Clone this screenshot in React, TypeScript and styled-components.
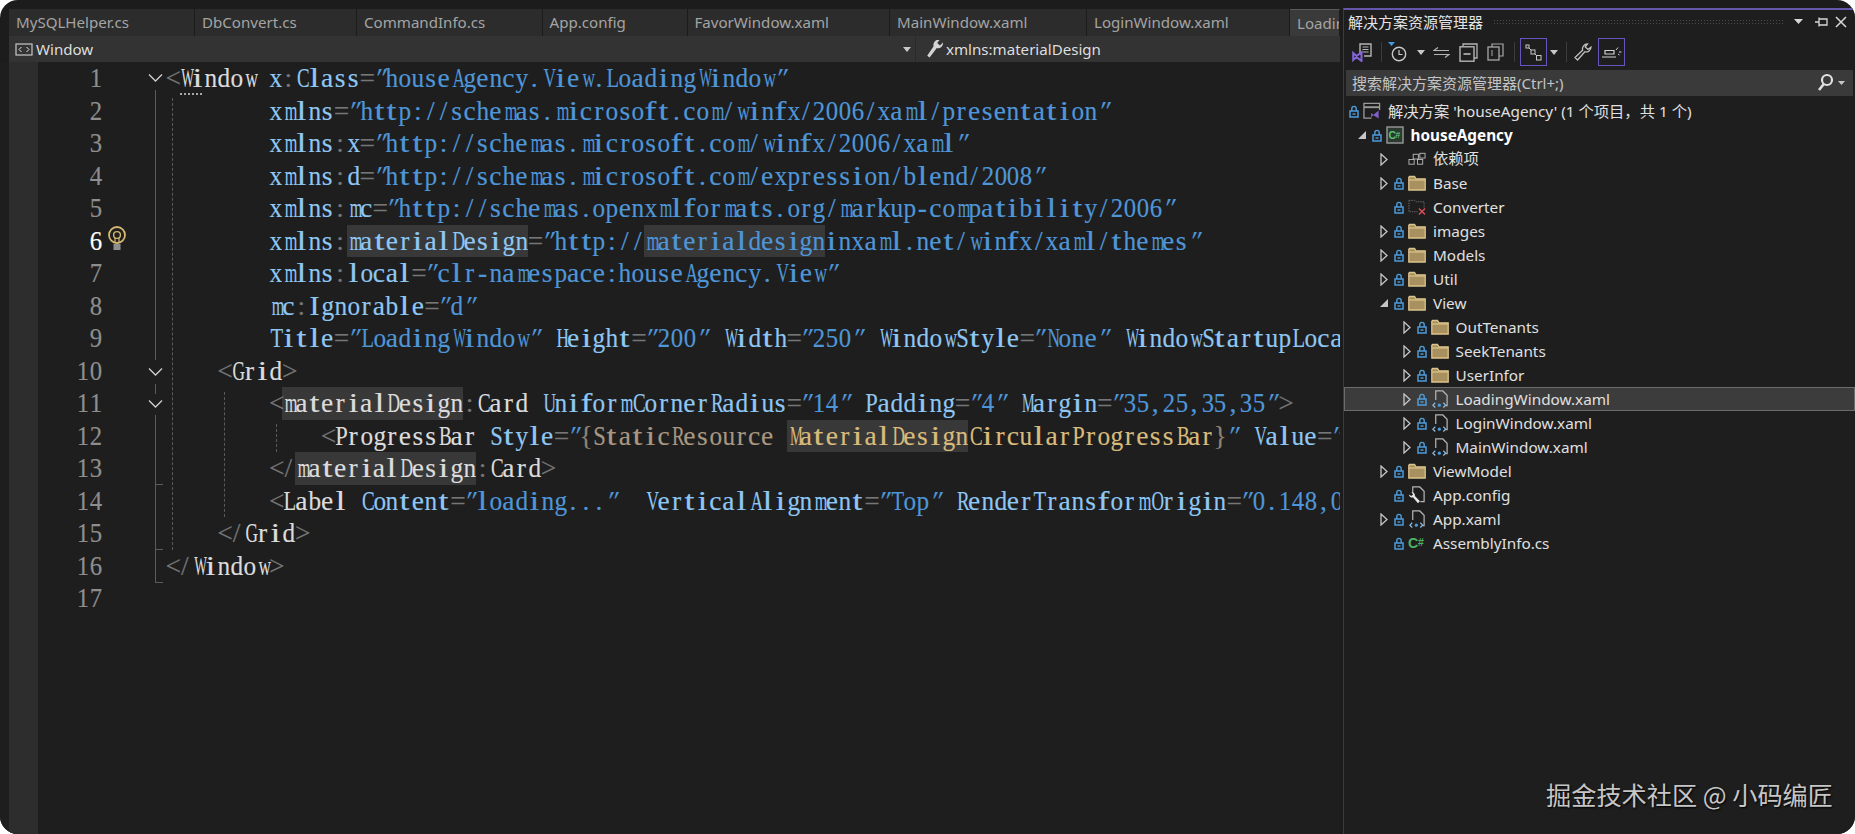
import React from 'react'
import styled, { createGlobalStyle } from 'styled-components'

const UI_FONT = '"Noto Sans", "Noto Sans CJK SC", sans-serif'
const CELL = 12.95
const ROW = 32.5
const CODE_SIZE = 27.5

const GlobalStyle = createGlobalStyle`
  html, body {
    margin: 0;
    padding: 0;
    background: #ffffff;
  }
`

type Kind = 'punct' | 'tag' | 'attr' | 'value' | 'static' | 'resource' | 'brace'
type Token = { kind: Kind; text: string; mark?: boolean }

const tk = (kind: Kind, text: string, mark?: boolean): Token => ({ kind, text, mark })
const p = (text: string) => tk('punct', text)
const sp = (n = 1) => tk('attr', ' '.repeat(n))
const attr = (name: string, value: string): Token[] => [
  tk('attr', name),
  p('='),
  tk('value', `"${value}"`),
]
const nsAttr = (ns: string, name: string, value: string): Token[] => [
  tk('attr', ns),
  p(':'),
  ...attr(name, value),
]

const CODE: Token[][] = [
  [p('<'), tk('tag', 'Window'), sp(), ...nsAttr('x', 'Class', 'houseAgency.View.LoadingWindow')],
  [sp(8), ...attr('xmlns', 'http://schemas.microsoft.com/winfx/2006/xaml/presentation')],
  [sp(8), ...nsAttr('xmlns', 'x', 'http://schemas.microsoft.com/winfx/2006/xaml')],
  [sp(8), ...nsAttr('xmlns', 'd', 'http://schemas.microsoft.com/expression/blend/2008')],
  [sp(8), ...nsAttr('xmlns', 'mc', 'http://schemas.openxmlformats.org/markup-compatibility/2006')],
  [
    sp(8),
    tk('attr', 'xmlns'),
    p(':'),
    tk('attr', 'materialDesign', true),
    p('='),
    tk('value', '"http://'),
    tk('value', 'materialdesign', true),
    tk('value', 'inxaml.net/winfx/xaml/themes"'),
  ],
  [sp(8), ...nsAttr('xmlns', 'local', 'clr-namespace:houseAgency.View')],
  [sp(8), ...nsAttr('mc', 'Ignorable', 'd')],
  [
    sp(8),
    ...attr('Title', 'LoadingWindow'),
    sp(),
    ...attr('Height', '200'),
    sp(),
    ...attr('Width', '250'),
    sp(),
    ...attr('WindowStyle', 'None'),
    sp(),
    ...attr('WindowStartupLocation', 'CenterScreen'),
  ],
  [sp(4), p('<'), tk('tag', 'Grid'), p('>')],
  [
    sp(8),
    p('<'),
    tk('tag', 'materialDesign', true),
    p(':'),
    tk('tag', 'Card'),
    sp(),
    ...attr('UniformCornerRadius', '14'),
    sp(),
    ...attr('Padding', '4'),
    sp(),
    ...attr('Margin', '35,25,35,35'),
    p('>'),
  ],
  [
    sp(12),
    p('<'),
    tk('tag', 'ProgressBar'),
    sp(),
    tk('attr', 'Style'),
    p('='),
    tk('value', '"'),
    tk('brace', '{'),
    tk('static', 'StaticResource '),
    tk('resource', 'MaterialDesign', true),
    tk('resource', 'CircularProgressBar'),
    tk('brace', '}'),
    tk('value', '"'),
    sp(),
    ...attr('Value', '0'),
  ],
  [sp(8), p('</'), tk('tag', 'materialDesign', true), p(':'), tk('tag', 'Card'), p('>')],
  [
    sp(8),
    p('<'),
    tk('tag', 'Label'),
    sp(),
    ...attr('Content', 'loading...'),
    sp(2),
    ...attr('VerticalAlignment', 'Top'),
    sp(),
    ...attr('RenderTransformOrigin', '0.148,0.5'),
  ],
  [sp(4), p('</'), tk('tag', 'Grid'), p('>')],
  [p('</'), tk('tag', 'Window'), p('>')],
  [],
]

const TABS = [
  { name: 'MySQLHelper.cs', width: 186 },
  { name: 'DbConvert.cs', width: 162 },
  { name: 'CommandInfo.cs', width: 185.5 },
  { name: 'App.config', width: 145 },
  { name: 'FavorWindow.xaml', width: 202.5 },
  { name: 'MainWindow.xaml', width: 197 },
  { name: 'LoginWindow.xaml', width: 203 },
  { name: 'LoadingWindow.xaml', width: 50, active: true },
]

type IconKind = 'folder' | 'missing' | 'xaml' | 'config' | 'cs' | 'deps' | 'solution' | 'project'
type TreeItem = {
  label: string
  depth: number
  icon: IconKind
  arrow?: 'closed' | 'open'
  noLock?: boolean
  bold?: boolean
  selected?: boolean
}

const TREE: TreeItem[] = [
  { label: "解决方案 'houseAgency' (1 个项目，共 1 个)", depth: 0, icon: 'solution' },
  { label: 'houseAgency', depth: 1, icon: 'project', arrow: 'open', bold: true },
  { label: '依赖项', depth: 2, icon: 'deps', arrow: 'closed', noLock: true },
  { label: 'Base', depth: 2, icon: 'folder', arrow: 'closed' },
  { label: 'Converter', depth: 2, icon: 'missing' },
  { label: 'images', depth: 2, icon: 'folder', arrow: 'closed' },
  { label: 'Models', depth: 2, icon: 'folder', arrow: 'closed' },
  { label: 'Util', depth: 2, icon: 'folder', arrow: 'closed' },
  { label: 'View', depth: 2, icon: 'folder', arrow: 'open' },
  { label: 'OutTenants', depth: 3, icon: 'folder', arrow: 'closed' },
  { label: 'SeekTenants', depth: 3, icon: 'folder', arrow: 'closed' },
  { label: 'UserInfor', depth: 3, icon: 'folder', arrow: 'closed' },
  { label: 'LoadingWindow.xaml', depth: 3, icon: 'xaml', arrow: 'closed', selected: true },
  { label: 'LoginWindow.xaml', depth: 3, icon: 'xaml', arrow: 'closed' },
  { label: 'MainWindow.xaml', depth: 3, icon: 'xaml', arrow: 'closed' },
  { label: 'ViewModel', depth: 2, icon: 'folder', arrow: 'closed' },
  { label: 'App.config', depth: 2, icon: 'config' },
  { label: 'App.xaml', depth: 2, icon: 'xaml', arrow: 'closed' },
  { label: 'AssemblyInfo.cs', depth: 2, icon: 'cs' },
]

// Times metrics, used to squeeze the glyphs into a fixed width grid like SimSun
const WIDE: Record<string, number> = {
  W: 0.944, M: 0.889, m: 0.778, w: 0.722, H: 0.722, A: 0.722, D: 0.722, U: 0.722, G: 0.722,
  V: 0.722, N: 0.722, O: 0.722, C: 0.667, R: 0.667, B: 0.667, T: 0.611, L: 0.611, P: 0.556,
  S: 0.556, I: 0.4,
  n: 0.5, h: 0.5, u: 0.5, d: 0.5, b: 0.5, p: 0.5, g: 0.5, o: 0.5, x: 0.5, y: 0.5, v: 0.5,
}
const glyphScale = (ch: string) => {
  if (ch === 'i' || ch === 'l' || ch === 'f' || ch === 't' || ch === 'j') return 1.3
  const w = WIDE[ch]
  if (w) return Math.round((12.6 / (w * CODE_SIZE)) * 100) / 100
  return /[0-9]/.test(ch) ? 0.9 : 1
}

const KIND_COLOR: Record<Kind, string> = {
  punct: '#767676',
  tag: '#dcdcdc',
  attr: '#8fc7f3',
  value: '#4f96d8',
  static: '#a89782',
  resource: '#d9bb7c',
  brace: '#8f8272',
}

const Shell = styled.div`
  position: relative;
  width: 1855px;
  height: 834px;
  display: grid;
  grid-template-columns: 1343px 512px;
  border-radius: 18px;
  overflow: hidden;
  background: #1c1c1c;
`

const EditorPane = styled.div`
  position: relative;
  display: flex;
  flex-direction: column;
  padding: 9px 3px 0 9px;
  overflow: hidden;
`

const TabStrip = styled.div`
  display: flex;
  height: 27px;
  flex: none;
  overflow: hidden;
`

const Tab = styled.div<{ $width: number; $active?: boolean }>`
  flex: none;
  box-sizing: border-box;
  width: ${(props) => props.$width}px;
  padding-left: 7px;
  border-right: 1px solid #1c1c1c;
  background: ${(props) => (props.$active ? '#3a3a3a' : '#2c2c2c')};
  border-top: ${(props) => (props.$active ? '1px solid #5a5a5a' : 'none')};
  color: #a4a4a4;
  font: 15.1px/27px ${UI_FONT};
  white-space: nowrap;
  overflow: hidden;
`

const NavBar = styled.div`
  position: relative;
  flex: none;
  height: 26px;
  background: #333333;
  color: #dedede;
  font: 15.1px/26px ${UI_FONT};
`

const NavLeft = styled.div`
  position: absolute;
  left: 6px;
  top: 0;
  display: flex;
  align-items: center;
  gap: 3px;
  height: 26px;
`

const NavRight = styled.div`
  position: absolute;
  left: 906px;
  top: 0;
  display: flex;
  align-items: center;
  gap: 2px;
  height: 26px;
  padding-left: 10px;
  border-left: 1px solid #2a2a2a;
`

const NavCaret = styled.div`
  position: absolute;
  left: 894px;
  top: 11px;
  width: 0;
  height: 0;
  border: 4px solid transparent;
  border-top: 5px solid #c8c8c8;
  border-bottom: 0;
`

const CodeArea = styled.div`
  position: relative;
  flex: 1;
  margin-left: -9px;
  background: #1e1e1e;
  overflow: hidden;
`

const MarginBand = styled.div`
  position: absolute;
  left: 9px;
  top: 0;
  bottom: 0;
  width: 29px;
  background: #2d2d2d;
`

const Rule = styled.div<{ $x: number; $top: number; $bottom: number; $dashed?: boolean }>`
  position: absolute;
  left: ${(props) => props.$x}px;
  top: ${(props) => props.$top - 62}px;
  height: ${(props) => props.$bottom - props.$top}px;
  border-left: 1px ${(props) => (props.$dashed ? 'dashed #5a5a5a' : 'solid #5c5c5c')};
`

const Tick = styled.div<{ $y: number }>`
  position: absolute;
  left: 155px;
  top: ${(props) => props.$y - 62}px;
  width: 8px;
  border-top: 1px solid #5c5c5c;
`

const Chevron = styled.svg<{ $y: number }>`
  position: absolute;
  left: 148px;
  top: ${(props) => props.$y - 62 - 5}px;
`

const Dots = styled.div`
  position: absolute;
  left: 180px;
  top: 31px;
  width: 22px;
  border-top: 2px dotted #a8a8a8;
`

const Bulb = styled.svg`
  position: absolute;
  left: 107px;
  top: 164px;
`

const CodeRow = styled.div`
  position: relative;
  display: grid;
  grid-template-columns: 102px 63.5px 1fr;
  height: ${ROW}px;
  line-height: ${ROW}px;
  font-family: "Liberation Serif", "Noto Sans CJK SC", serif;
  font-size: ${CODE_SIZE}px;
  -webkit-text-stroke: 0.15px currentColor;
  white-space: pre;
`

const LineNo = styled.div<{ $current?: boolean }>`
  text-align: right;
  color: ${(props) => (props.$current ? '#ffffff' : '#8e8e8e')};
`

const CodeText = styled.div`
  grid-column: 3;
`

const Span = styled.span<{ $kind: Kind; $mark?: boolean }>`
  display: inline-block;
  height: ${ROW}px;
  color: ${(props) => KIND_COLOR[props.$kind]};
  background: ${(props) => (props.$mark ? '#383838' : 'transparent')};
`

const Ch = styled.span<{ $scale: number; $slant?: boolean }>`
  display: inline-block;
  width: ${CELL}px;
  text-align: center;
  transform: scaleX(${(props) => props.$scale}) ${(props) => (props.$slant ? 'skewX(-22deg)' : '')};
`

const Explorer = styled.div`
  position: relative;
  border-left: 1px solid #3b3b3b;
  border-top: 2px solid #6657ab;
  margin-top: 8px;
  background: #1e1e1e;
  color: #e0e0e0;
  font-family: ${UI_FONT};
`

const TitleBar = styled.div`
  position: relative;
  height: 28px;
  padding-left: 4px;
  font-size: 15px;
  line-height: 24px;
  color: #e4e4e4;
`

const Grip = styled.div`
  position: absolute;
  left: 149px;
  top: 9px;
  width: 292px;
  height: 6px;
  background-image: radial-gradient(#4a4a4a 0.7px, transparent 0.8px);
  background-size: 3px 3px;
`

const TitleButtons = styled.svg`
  position: absolute;
  left: 448px;
  top: 4px;
`

const ToolStrip = styled.div`
  display: flex;
  align-items: center;
  height: 28px;
`

const Tool = styled.div<{ $w: number; $toggled?: boolean }>`
  flex: none;
  box-sizing: border-box;
  display: flex;
  align-items: center;
  justify-content: center;
  width: ${(props) => props.$w}px;
  height: 28px;
  border: ${(props) => (props.$toggled ? '1px solid #6657c0' : 'none')};
`

const ToolSep = styled.div<{ $left: number; $right: number }>`
  flex: none;
  width: 1px;
  height: 20px;
  margin: 0 ${(props) => props.$right}px 0 ${(props) => props.$left}px;
  background: #3c3c3c;
`

const Caret = styled.div`
  width: 0;
  height: 0;
  border: 4px solid transparent;
  border-top: 5px solid #c8c8c8;
  border-bottom: 0;
`

const SearchBox = styled.div`
  position: relative;
  box-sizing: border-box;
  height: 26px;
  margin: 4px 2px 0 2px;
  padding-left: 6px;
  background: #3a3a3a;
  color: #c4c4c4;
  font-size: 15px;
  line-height: 26px;
`

const SearchIcon = styled.svg`
  position: absolute;
  right: 6px;
  top: 3px;
`

const Tree = styled.div`
  margin-top: 3px;
`

const TreeRow = styled.div<{ $selected?: boolean }>`
  box-sizing: border-box;
  display: flex;
  align-items: center;
  height: 24px;
  background: ${(props) => (props.$selected ? '#3c3c3c' : 'transparent')};
  box-shadow: ${(props) => (props.$selected ? 'inset 0 0 0 1px #6c6c6c' : 'none')};
`

const ArrowSlot = styled.div<{ $depth: number }>`
  flex: none;
  display: flex;
  align-items: center;
  justify-content: center;
  width: 18px;
  margin-left: ${(props) => props.$depth * 22.5 - 14}px;
`

const LockSlot = styled.div`
  flex: none;
  display: flex;
  justify-content: center;
  width: 12px;
  margin-right: 3px;
`

const IconSlot = styled.div`
  flex: none;
  display: flex;
  align-items: center;
  justify-content: center;
  width: 18px;
  height: 20px;
  margin-right: 7px;
`

const Label = styled.div<{ $bold?: boolean; $nudge?: boolean }>`
  position: relative;
  top: ${(props) => (props.$nudge ? '-1px' : '0')};
  color: ${(props) => (props.$bold ? '#ffffff' : '#e0e0e0')};
  font-size: 15.3px;
  line-height: 24px;
  font-weight: ${(props) => (props.$bold ? 700 : 400)};
  white-space: pre;
`

const Watermark = styled.div`
  position: absolute;
  left: 1546px;
  top: 777px;
  color: #c6c6c6;
  font: 25.2px/34px "Noto Sans CJK SC", "Noto Sans", sans-serif;
  text-shadow: 1px 1px 2px #000000;
  white-space: pre;
`

function Glyphs({ text }: { text: string }) {
  return (
    <>
      {[...text].map((ch, i) => (
        <Ch key={i} $scale={glyphScale(ch)} $slant={ch === '"'}>
          {ch}
        </Ch>
      ))}
    </>
  )
}

function FoldChevron({ y }: { y: number }) {
  return (
    <Chevron $y={y} width="15" height="10" viewBox="0 0 15 10">
      <path d="M1 1.5 L7.5 8 L14 1.5" fill="none" stroke="#d0d0d0" strokeWidth="1.3" />
    </Chevron>
  )
}

function LockIcon() {
  return (
    <svg width="10" height="13" viewBox="0 0 10 13">
      <path d="M2.8 6V3.6a2.2 2.2 0 0 1 4.4 0V6" fill="none" stroke="#4d9ddb" strokeWidth="1.4" />
      <rect x="1" y="6" width="8" height="6" fill="none" stroke="#4d9ddb" strokeWidth="1.5" />
      <rect x="3.5" y="8.3" width="3" height="1.4" fill="#4d9ddb" />
    </svg>
  )
}

function Arrow({ open }: { open: boolean }) {
  return open ? (
    <svg width="10" height="10" viewBox="0 0 10 10">
      <path d="M9 1 V9 H1 Z" fill="#c6c6c6" />
    </svg>
  ) : (
    <svg width="8" height="13" viewBox="0 0 8 13">
      <path d="M1 1 L7 6.5 L1 12 Z" fill="none" stroke="#c6c6c6" strokeWidth="1.3" />
    </svg>
  )
}

function XamlDoc() {
  return (
    <svg width="19" height="20" viewBox="0 0 19 20">
      <path d="M5 11 V1.5 H12.5 L17 6 V17 H15.5" fill="none" stroke="#b4b4b4" strokeWidth="1.3" />
      <path d="M4.5 14 L2 16.5 L4.5 19 M13 14 L15.5 16.5 L13 19" fill="none" stroke="#8cbde6" strokeWidth="1.3" />
      <circle cx="8.8" cy="16.5" r="1.7" fill="#4d9ddb" />
    </svg>
  )
}

function TreeIcon({ kind }: { kind: IconKind }) {
  switch (kind) {
    case 'folder':
      return (
        <svg width="18" height="16" viewBox="0 0 18 16">
          <path d="M.8 2.2 V15 H17.2 V3.8 H8 L6.5 1.5 H1.5 Z" fill="#a8915f" stroke="#dcc48c" strokeWidth="1.3" />
          <path d="M1 5 H17" stroke="#dcc48c" strokeWidth="1.2" />
        </svg>
      )
    case 'missing':
      return (
        <svg width="19" height="18" viewBox="0 0 19 18">
          <path d="M1 2 H7 L8.5 3.5 H17 V10 M1 2 V14 H10" fill="none" stroke="#6c6c6c" strokeWidth="1" strokeDasharray="1.5 1" />
          <path d="M11.5 10.5 L18 17 M18 10.5 L11.5 17" stroke="#d9505a" strokeWidth="1.5" />
        </svg>
      )
    case 'xaml':
      return <XamlDoc />
    case 'config':
      return (
        <svg width="19" height="20" viewBox="0 0 19 20">
          <path d="M5 8 V1.5 H12.5 L17 6 V17 H13" fill="none" stroke="#b4b4b4" strokeWidth="1.3" />
          <path d="M1 9.5 A3.4 3.4 0 0 0 5.4 12.6 L10.5 18.6 L12.6 16.6 L7.3 11 A3.4 3.4 0 0 0 3.6 7 L5.4 9.4 L3.4 11 Z" fill="#e6e6e6" />
        </svg>
      )
    case 'cs':
      return (
        <svg width="19" height="16" viewBox="0 0 19 16">
          <text x="0" y="13.5" fontFamily="Liberation Sans, sans-serif" fontSize="15" fontWeight="700" fill="#4fb366">
            C
          </text>
          <text x="10.5" y="11.5" fontFamily="Liberation Sans, sans-serif" fontSize="11" fontWeight="700" fill="#4fb366">
            #
          </text>
        </svg>
      )
    case 'deps':
      return (
        <svg width="19" height="14" viewBox="0 0 19 14">
          <rect x="1" y="7.5" width="5.5" height="5" fill="none" stroke="#b4b4b4" />
          <rect x="5.5" y="2" width="5.5" height="5" fill="none" stroke="#b4b4b4" />
          <rect x="10" y="7.5" width="5.5" height="5" fill="none" stroke="#b4b4b4" />
          <rect x="12.5" y="1" width="5.5" height="5" fill="none" stroke="#b4b4b4" />
        </svg>
      )
    case 'solution':
      return (
        <svg width="19" height="18" viewBox="0 0 19 18">
          <path d="M9 16.5 H1 V1 H17.5 V8" fill="none" stroke="#9a9a9a" strokeWidth="1.4" />
          <path d="M1 5 H17.5" stroke="#9a9a9a" strokeWidth="2" />
          <path d="M8.5 11 L11 13 L16.5 8.5 V17 L11 13.5 L8.5 15.5 Z" fill="#7d5fc6" />
        </svg>
      )
    case 'project':
      return (
        <svg width="18" height="18" viewBox="0 0 18 18">
          <rect x="1" y="1" width="16" height="16" fill="#2b3a2e" stroke="#9a9a9a" strokeWidth="1.4" />
          <text x="2.4" y="13" fontFamily="Liberation Sans, sans-serif" fontSize="10.5" fontWeight="700" fill="#5cc474">
            C
          </text>
          <text x="9.6" y="12" fontFamily="Liberation Sans, sans-serif" fontSize="8.5" fontWeight="700" fill="#5cc474">
            #
          </text>
        </svg>
      )
  }
}

export default function App() {
  return (
    <>
      <GlobalStyle />
      <Shell>
        <EditorPane>
          <TabStrip>
            {TABS.map((tab) => (
              <Tab key={tab.name} $width={tab.width} $active={tab.active}>
                {tab.name}
              </Tab>
            ))}
          </TabStrip>
          <NavBar>
            <NavLeft>
              <svg width="18" height="13" viewBox="0 0 18 13">
                <rect x="1" y="1" width="16" height="11" fill="none" stroke="#c8c8c8" strokeWidth="1.2" />
                <path d="M6.5 4 L4 6.5 L6.5 9 M11.5 4 L14 6.5 L11.5 9" fill="none" stroke="#e0e0e0" />
              </svg>
              Window
            </NavLeft>
            <NavCaret />
            <NavRight>
              <svg width="18" height="20" viewBox="0 0 18 20">
                <path d="M17 3.5 A5 5 0 0 1 10.8 9 L3.6 18.6 L1.2 16.8 L7.6 7.2 A5 5 0 0 1 13.5 1 L11.2 4 L14 6.4 Z" fill="#d4d4d4" />
              </svg>
              xmlns:materialDesign
            </NavRight>
          </NavBar>
          <CodeArea>
            <MarginBand />
            <FoldChevron y={78} />
            <Rule $x={155} $top={90} $bottom={360} />
            <FoldChevron y={372} />
            <Rule $x={155} $top={384} $bottom={394} />
            <FoldChevron y={404} />
            <Rule $x={155} $top={415} $bottom={582} />
            <Tick $y={484} />
            <Tick $y={549} />
            <Tick $y={582} />
            <Rule $x={172} $top={98} $bottom={550} $dashed />
            <Rule $x={224} $top={392} $bottom={517} $dashed />
            <Rule $x={276} $top={424} $bottom={452} $dashed />
            <Dots />
            <Bulb width="20" height="26" viewBox="0 0 20 26">
              <circle cx="10" cy="9" r="8" fill="none" stroke="#d4b872" strokeWidth="1.8" />
              <circle cx="10" cy="9" r="3.4" fill="none" stroke="#d4b872" strokeWidth="1.4" />
              <path d="M8 12 V17 M12 12 V17" stroke="#d4b872" strokeWidth="1.2" />
              <rect x="6.5" y="18" width="7" height="6" fill="#8e8e8e" />
            </Bulb>
            {CODE.map((line, i) => (
              <CodeRow key={i}>
                <LineNo $current={i === 5}>
                  <Glyphs text={String(i + 1)} />
                </LineNo>
                <CodeText>
                  {line.map((token, j) => (
                    <Span key={j} $kind={token.kind} $mark={token.mark}>
                      <Glyphs text={token.text} />
                    </Span>
                  ))}
                </CodeText>
              </CodeRow>
            ))}
          </CodeArea>
        </EditorPane>
        <Explorer>
          <TitleBar>
            解决方案资源管理器
            <Grip />
            <TitleButtons width="60" height="16" viewBox="0 0 60 16">
              <path d="M2 5 H11 L6.5 10 Z" fill="#d8d8d8" />
              <path d="M23 8 H27 M27 3.5 V12.5 M27 5 H35 V11 H27" fill="none" stroke="#d8d8d8" strokeWidth="1.3" />
              <path d="M44 3 L54 13 M54 3 L44 13" stroke="#d8d8d8" strokeWidth="1.5" />
            </TitleButtons>
          </TitleBar>
          <ToolStrip>
            <Tool $w={37}>
              <svg width="21" height="19" viewBox="0 0 21 19">
                <path d="M8 10 V1 H19 V13 H12" fill="none" stroke="#b4b4b4" strokeWidth="1.4" />
                <path d="M10.5 4 H16.5 M10.5 6.5 H16.5 M10.5 9 H16.5" stroke="#b4b4b4" />
                <path d="M1.2 10 L4.5 13 L9.5 9.2 V18 L4.5 14 L1.2 17 Z" fill="none" stroke="#8464d8" strokeWidth="2" />
              </svg>
            </Tool>
            <ToolSep $left={0} $right={0} />
            <Tool $w={32}>
              <svg width="22" height="20" viewBox="0 0 22 20">
                <path d="M1 0 H8 L4.5 4 Z" fill="#3f9be0" />
                <circle cx="12" cy="12" r="6.7" fill="none" stroke="#c8c8c8" strokeWidth="1.4" />
                <path d="M12 8 V12.5 H15.5" fill="none" stroke="#c8c8c8" strokeWidth="1.2" />
              </svg>
            </Tool>
            <Tool $w={14}>
              <Caret />
            </Tool>
            <Tool $w={26}>
              <svg width="17" height="11" viewBox="0 0 17 11">
                <path d="M5 .5 L1 3.5 H16 M12 10.5 L16 7.5 H1" fill="none" stroke="#b4b4b4" strokeWidth="1.2" />
              </svg>
            </Tool>
            <Tool $w={28}>
              <svg width="19" height="19" viewBox="0 0 19 19">
                <path d="M4 3.5 V1 H18 V15 H15" fill="none" stroke="#b4b4b4" strokeWidth="1.3" />
                <rect x="1" y="3.8" width="14" height="14.4" fill="none" stroke="#b4b4b4" strokeWidth="1.4" />
                <path d="M4.5 11 H11.5" stroke="#d0d0d0" strokeWidth="1.4" />
              </svg>
            </Tool>
            <Tool $w={26}>
              <svg width="17" height="18" viewBox="0 0 17 18">
                <path d="M5 4 V1 H16 V13 H12" fill="none" stroke="#a8a8a8" strokeWidth="1.2" />
                <rect x="1" y="4" width="11" height="13" fill="none" stroke="#a8a8a8" strokeWidth="1.3" />
                <path d="M5 7 V13" stroke="#a8a8a8" />
              </svg>
            </Tool>
            <ToolSep $left={6} $right={5} />
            <Tool $w={27} $toggled>
              <svg width="17" height="17" viewBox="0 0 17 17">
                <rect x="1" y="1" width="3" height="3" fill="none" stroke="#c8c8c8" />
                <rect x="6" y="6" width="4" height="4" fill="none" stroke="#c8c8c8" />
                <rect x="11.5" y="11.5" width="4.5" height="4.5" fill="none" stroke="#c8c8c8" />
                <path d="M4 4 L6 6 M10 10 L11.5 11.5" stroke="#c8c8c8" />
              </svg>
            </Tool>
            <Tool $w={14}>
              <Caret />
            </Tool>
            <ToolSep $left={5} $right={0} />
            <Tool $w={31}>
              <svg width="18" height="18" viewBox="0 0 18 18">
                <path d="M17 4 A5 5 0 0 1 10.8 8.8 L3.6 17 L1 14.6 L8.6 7.2 A5 5 0 0 1 13.5 1 L11.2 4 L14 6.4 Z" fill="none" stroke="#c0c0c0" strokeWidth="1.3" />
              </svg>
            </Tool>
            <Tool $w={27} $toggled>
              <svg width="20" height="12" viewBox="0 0 20 12">
                <path d="M0 11 H14 M3 8 V4.5 H12 V8 Z" fill="none" stroke="#d0d0d0" strokeWidth="1.2" />
                <path d="M14 4 L16 1.5 M17 6 H19.5 M16 8 L17.5 9" stroke="#d0d0d0" />
              </svg>
            </Tool>
          </ToolStrip>
          <SearchBox>
            搜索解决方案资源管理器(Ctrl+;)
            <SearchIcon width="30" height="20" viewBox="0 0 30 20">
              <circle cx="10" cy="7" r="5" fill="none" stroke="#e0e0e0" strokeWidth="2.2" />
              <path d="M6.8 11 L2 17" stroke="#e0e0e0" strokeWidth="2.6" />
              <path d="M21 8 H28 L24.5 12 Z" fill="#c8c8c8" />
            </SearchIcon>
          </SearchBox>
          <Tree>
            {TREE.map((item) => (
              <TreeRow key={item.label} $selected={item.selected}>
                <ArrowSlot $depth={item.depth}>
                  {item.arrow && <Arrow open={item.arrow === 'open'} />}
                </ArrowSlot>
                <LockSlot>{!item.noLock && <LockIcon />}</LockSlot>
                <IconSlot>
                  <TreeIcon kind={item.icon} />
                </IconSlot>
                <Label $bold={item.bold} $nudge={item.noLock}>
                  {item.label}
                </Label>
              </TreeRow>
            ))}
          </Tree>
        </Explorer>
        <Watermark>掘金技术社区 @ 小码编匠</Watermark>
      </Shell>
    </>
  )
}
